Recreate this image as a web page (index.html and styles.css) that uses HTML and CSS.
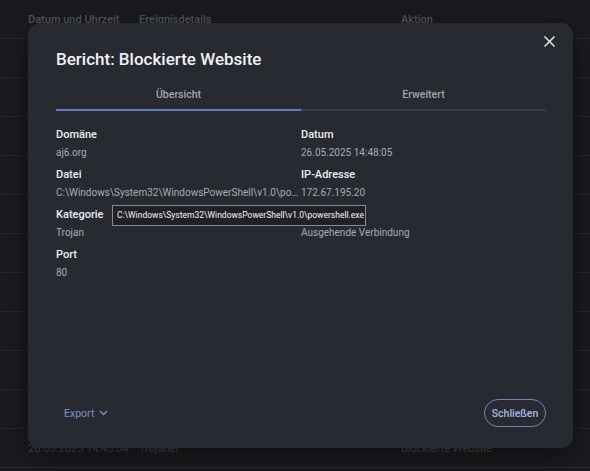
FILE: index.html
```html
<!DOCTYPE html>
<html lang="de">
<head>
<meta charset="utf-8">
<link rel="stylesheet" href="styles.css">
</head>
<body>
<div class="table">
  <div class="row head"><span class="c1">Datum und Uhrzeit</span><span class="c2">Ereignisdetails</span><span class="c3">Aktion</span></div>
  <div class="row"><span class="c1">26.05.2025 14:48:05</span><span class="c2">Trojaner</span><span class="c3">Blockierte Website</span></div>
  <div class="row"><span class="c1">26.05.2025 14:47:51</span><span class="c2">Trojaner</span><span class="c3">Blockierte Website</span></div>
  <div class="row"><span class="c1">26.05.2025 14:47:12</span><span class="c2">Trojaner</span><span class="c3">Blockierte Website</span></div>
  <div class="row"><span class="c1">26.05.2025 14:46:40</span><span class="c2">Trojaner</span><span class="c3">Blockierte Website</span></div>
  <div class="row"><span class="c1">26.05.2025 14:46:02</span><span class="c2">Trojaner</span><span class="c3">Blockierte Website</span></div>
  <div class="row"><span class="c1">26.05.2025 14:45:31</span><span class="c2">Trojaner</span><span class="c3">Blockierte Website</span></div>
  <div class="row"><span class="c1">26.05.2025 14:45:10</span><span class="c2">Trojaner</span><span class="c3">Blockierte Website</span></div>
  <div class="row"><span class="c1">26.05.2025 14:44:48</span><span class="c2">Trojaner</span><span class="c3">Blockierte Website</span></div>
  <div class="row"><span class="c1">26.05.2025 14:44:20</span><span class="c2">Trojaner</span><span class="c3">Blockierte Website</span></div>
  <div class="row"><span class="c1">26.05.2025 14:43:59</span><span class="c2">Trojaner</span><span class="c3">Blockierte Website</span></div>
  <div class="row"><span class="c1">26.05.2025 14:43:34</span><span class="c2">Trojaner</span><span class="c3">Blockierte Website</span></div>
</div>

<div class="modal">
  <button class="close" aria-label="Schließen">
    <svg width="11" height="11" viewBox="0 0 11 11"><path d="M1 1L10 10M10 1L1 10" stroke="#e6e7ea" stroke-width="1.5" fill="none" stroke-linecap="square"/></svg>
  </button>
  <h1 class="title">Bericht: Blockierte Website</h1>
  <div class="tabs">
    <div class="tab active">Übersicht</div>
    <div class="tab">Erweitert</div>
  </div>
  <div class="fields">
    <div class="field"><div class="label">Domäne</div><div class="value">aj6.org</div></div>
    <div class="field"><div class="label">Datum</div><div class="value">26.05.2025 14:48:05</div></div>
    <div class="field"><div class="label">Datei</div><div class="value">C:\Windows\System32\WindowsPowerShell\v1.0\powershell.exe</div></div>
    <div class="field"><div class="label">IP-Adresse</div><div class="value">172.67.195.20</div></div>
    <div class="field"><div class="label">Kategorie</div><div class="value">Trojan</div></div>
    <div class="field"><div class="label">Richtung</div><div class="value">Ausgehende Verbindung</div></div>
    <div class="field"><div class="label">Port</div><div class="value">80</div></div>
  </div>
  <div class="footer">
    <button class="export">Export <svg width="9" height="6" viewBox="0 0 9 6"><path d="M1 1L4.5 4.5L8 1" stroke="#7d90d2" stroke-width="1.4" fill="none"/></svg></button>
    <button class="closebtn">Schließen</button>
  </div>
  <div class="tooltip">C:\Windows\System32\WindowsPowerShell\v1.0\powershell.exe</div>
</div>
</body>
</html>
```

FILE: styles.css
```css
* { box-sizing: border-box; }
html, body { margin: 0; padding: 0; }
body {
  width: 590px;
  height: 471px;
  overflow: hidden;
  background: #1b1b1f;
  font-family: Roboto, "Noto Sans", sans-serif;
  position: relative;
}
.table { display: flex; flex-direction: column; }
.row {
  height: 39px;
  display: flex;
  align-items: center;
  border-bottom: 1px solid #27282d;
  font-size: 11px;
  color: #48494e;
  flex-shrink: 0;
}
.row.head { color: #56575c; font-weight: 500; }
.c1 { margin-left: 28px; width: 111px; }
.c2 { width: 262px; }

.modal {
  position: absolute;
  left: 28px;
  top: 23px;
  width: 545px;
  height: 425px;
  background: #272a31;
  border-radius: 12px;
  box-shadow: 0 6px 24px rgba(0,0,0,0.5);
  padding: 24px 27px 21px 28px;
  display: flex;
  flex-direction: column;
}
.close {
  position: absolute;
  right: 16px;
  top: 10px;
  width: 16px;
  height: 16px;
  padding: 0;
  border: 0;
  background: none;
  display: flex;
  align-items: center;
  justify-content: center;
}
.title {
  margin: 0;
  font-size: 17px;
  line-height: 24px;
  font-weight: 500;
  color: #f1f2f4;
}
.tabs {
  margin-top: 8px;
  display: grid;
  grid-template-columns: 1fr 1fr;
  border-bottom: 2px solid #3a3d45;
}
.tab {
  height: 32px;
  display: flex;
  align-items: center;
  justify-content: center;
  font-size: 10.5px;
  font-weight: 500;
  color: #a4a6ac;
  margin-bottom: -2px;
  border-bottom: 2px solid transparent;
}
.tab.active { border-bottom-color: #6479c2; }
.fields {
  margin-top: 15px;
  display: grid;
  grid-template-columns: 245px 245px;
  row-gap: 5px;
}
.label {
  font-size: 11px;
  line-height: 18px;
  font-weight: 500;
  color: #eceef0;
}
.value {
  font-size: 10px;
  line-height: 17px;
  color: #a9abb1;
  white-space: nowrap;
  overflow: hidden;
  text-overflow: ellipsis;
}
.footer {
  margin-top: auto;
  display: flex;
  justify-content: space-between;
  align-items: center;
}
.export {
  background: none;
  border: 0;
  padding: 6px 8px;
  font-family: inherit;
  font-size: 10.5px;
  color: #7d90d2;
  display: flex;
  align-items: center;
  gap: 5px;
}
.closebtn {
  height: 28px;
  width: 62px;
  padding: 0;
  border-radius: 14px;
  border: 1px solid #7583bc;
  background: none;
  font-family: inherit;
  font-size: 10.5px;
  font-weight: 500;
  color: #aab6e4;
}
.tooltip {
  position: absolute;
  left: 84px;
  top: 182px;
  width: 254px;
  height: 21px;
  background: #202126;
  border: 1px solid #8a8b90;
  color: #f4f4f4;
  font-size: 8.5px;
  line-height: 19px;
  padding: 0 4px;
  white-space: nowrap;
  overflow: hidden;
}
```
